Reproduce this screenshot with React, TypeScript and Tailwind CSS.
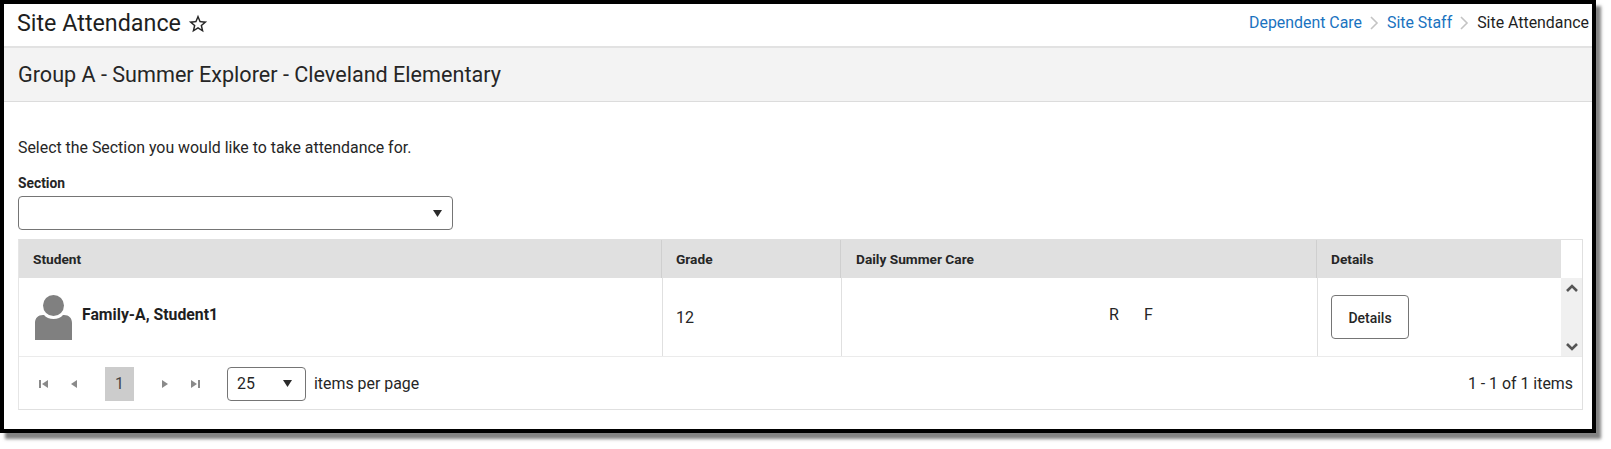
import React from 'react';

const Caret = () => (
    <svg width="9" height="7" viewBox="0 0 10 7" preserveAspectRatio="none" className="fill-[#2a2a2a]">
        <path d="M0 0h10L5 7z" />
    </svg>
);

const PagerIcon = ({ d }: { d: string }) => (
    <svg width="10" height="10" viewBox="0 0 10 10" className="fill-[#8a8a8a]">
        <path d={d} />
    </svg>
);

const Sep = () => (
    <svg width="9" height="14" viewBox="0 0 9 14" fill="none" className="stroke-[#c4c4c4] mx-[8px]" strokeWidth="1.6">
        <path d="M1 1l6 6-6 6" />
    </svg>
);

const App = () => {
    return (
        <div className="w-[1611px] h-[449px] bg-white overflow-hidden font-['Roboto',sans-serif] text-[#262626]">
            <div className="w-[1596px] h-[433px] border-4 border-black shadow-[5px_6px_3px_rgba(90,90,90,0.75)] bg-white">
                {/* title bar */}
                <div className="h-[44px] flex justify-between items-center border-b-2 border-[#e2e2e2]">
                    <div className="flex items-center pl-[13px] pb-[3px]">
                        <span className="text-[23.3px] text-[#1f1f1f]">Site Attendance</span>
                        <svg width="22" height="22" viewBox="0 0 24 24" className="ml-[6px] fill-[#262626]">
                            <path d="M22 9.24l-7.19-.62L12 2 9.19 8.63 2 9.24l5.46 4.73L5.82 21 12 17.27 18.18 21l-1.63-7.03L22 9.24zM12 15.4l-3.76 2.27 1-4.28-3.32-2.88 4.38-.38L12 6.1l1.71 4.04 4.38.38-3.32 2.88 1 4.28L12 15.4z" />
                        </svg>
                    </div>
                    <div className="flex items-center text-[15.9px] pr-[3px] pb-[4px]">
                        <a className="text-[#1a73c0]">Dependent Care</a>
                        <Sep />
                        <a className="text-[#1a73c0]">Site Staff</a>
                        <Sep />
                        <span className="text-[#1f1f1f]">Site Attendance</span>
                    </div>
                </div>
                {/* group header */}
                <div className="h-[54px] bg-[#f3f3f3] border-b border-[#dcdcdc] flex items-center pl-[14px] pt-[1px]">
                    <h1 className="text-[21.6px] text-[#262626]">Group A - Summer Explorer - Cleveland Elementary</h1>
                </div>

                <div className="pl-[14px] pr-[9px]">
                    <p className="text-[15.9px] leading-[20px] mt-[36px]">Select the Section you would like to take attendance for.</p>
                    <label className="block text-[13.8px] leading-[18px] font-bold mt-[16px]">Section</label>
                    <div className="w-[435px] h-[34px] mt-[4px] border border-[#757575] rounded-[4px] flex items-center justify-end pr-[10px]">
                        <Caret />
                    </div>

                    {/* grid */}
                    <div className="mt-[9px] h-[171px] border border-[#e0e0e0] border-l-[#e6e6e6]">
                        <div className="flex h-[38px] text-[13.7px] font-bold">
                            <div className="flex-1 flex bg-[#e0e0e0]">
                                <div className="w-[642px] pl-[14px] flex items-center">Student</div>
                                <div className="w-[179px] pl-[14px] flex items-center border-l border-[#cfcfcf]">Grade</div>
                                <div className="w-[476px] pl-[15px] flex items-center border-l border-[#cfcfcf]">Daily Summer Care</div>
                                <div className="flex-1 pl-[14px] flex items-center border-l border-[#cfcfcf]">Details</div>
                            </div>
                            <div className="w-[21px]" />
                        </div>
                        <div className="flex h-[79px] border-b border-[#ebebeb]">
                            <div className="w-[643px] pl-[16px] flex items-center">
                                <svg width="37" height="45" viewBox="0 0 37 45" className="fill-[#808080]">
                                    <circle cx="18.5" cy="10.5" r="10.5" />
                                    <path d="M0 45V28c0-5 3-8 8-8h1c2 2.500 5.500 4 9.500 4s7.500-1.500 9.500-4h1c5 0 8 3 8 8v17z" />
                                </svg>
                                <span className="ml-[10px] text-[15.8px] font-bold text-[#1f1f1f] mb-[5px]">Family-A, Student1</span>
                            </div>
                            <div className="w-[179px] pl-[13px] pt-[2px] flex items-center border-l border-[#e0e0e0] text-[16px]">12</div>
                            <div className="w-[476px] flex items-center border-l border-[#e0e0e0] text-[16px] pb-[5px] pl-[267px]">
                                <span className="w-[35px]">R</span>
                                <span>F</span>
                            </div>
                            <div className="flex-1 pl-[13px] flex items-center border-l border-[#e0e0e0]">
                                <button className="w-[78px] h-[44px] pt-[2px] border border-[#757575] rounded-[4px] text-[14px] font-medium">Details</button>
                            </div>
                            <div className="w-[21px] shrink-0 bg-[#f0f0f0] flex flex-col items-center justify-between pt-[6px] pb-[5px]">
                                <svg width="12" height="8" viewBox="0 0 12 8" fill="none" className="stroke-[#555555]" strokeWidth="2.600">
                                    <path d="M1 7l5-5 5 5" />
                                </svg>
                                <svg width="12" height="8" viewBox="0 0 12 8" fill="none" className="stroke-[#555555]" strokeWidth="2.600">
                                    <path d="M1 1l5 5 5-5" />
                                </svg>
                            </div>
                        </div>
                        {/* pager */}
                        <div className="h-[52px] flex items-center justify-between pr-[9px] pt-[1px] text-[15.9px]">
                            <div className="flex items-center">
                                <div className="flex items-center ml-[20px] gap-[20px]">
                                    <PagerIcon d="M0 1h2v8H0zM9 1v8L3 5z" />
                                    <PagerIcon d="M8 1v8L2 5z" />
                                </div>
                                <div className="w-[29px] h-[34px] ml-[26px] bg-[#cccccc] flex items-center justify-center text-[#444444]">1</div>
                                <div className="flex items-center ml-[26px] gap-[20px]">
                                    <PagerIcon d="M2 1v8l6-4z" />
                                    <PagerIcon d="M1 1v8l6-4zM8 1h2v8H8z" />
                                </div>
                                <div className="w-[79px] h-[34px] ml-[27px] border border-[#757575] rounded-[4px] flex items-center justify-between pl-[9px] pr-[13px]">
                                    <span>25</span>
                                    <Caret />
                                </div>
                                <span className="ml-[8px]">items per page</span>
                            </div>
                            <span>1 - 1 of 1 items</span>
                        </div>
                    </div>
                </div>
            </div>
        </div>
    );
};

export default App;
